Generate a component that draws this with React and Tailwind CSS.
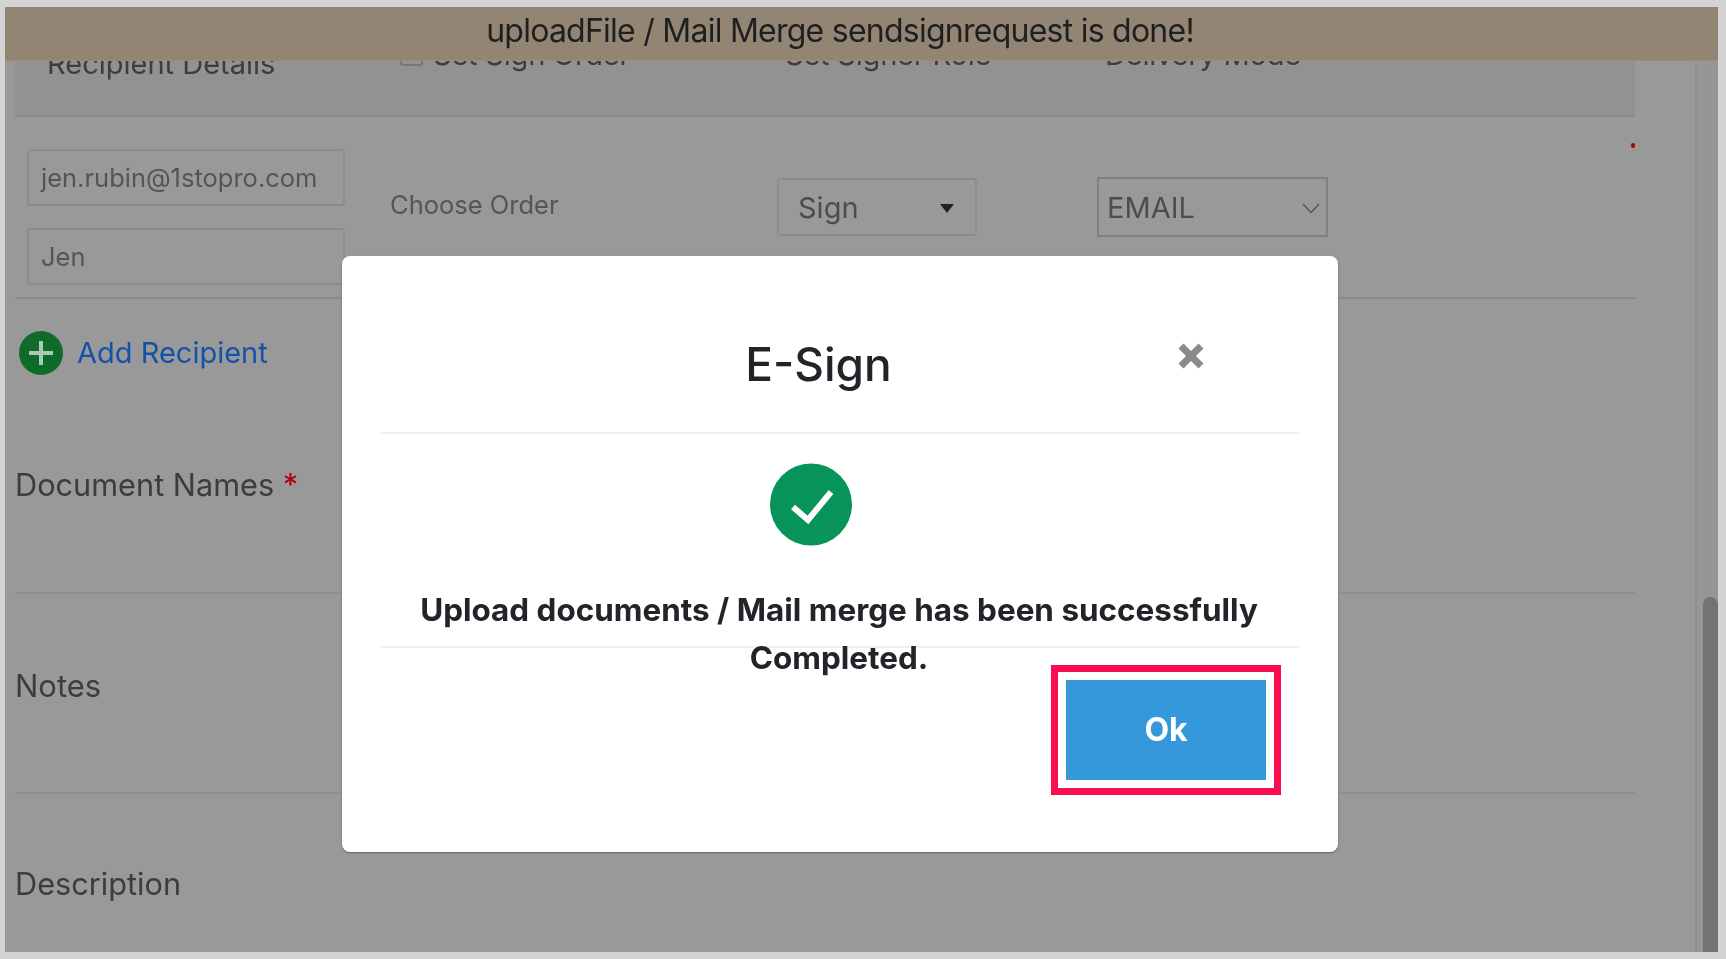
export default function App() {
  const font = { fontFamily: 'Inter, "Liberation Sans", sans-serif' };
  return (
    <div style={font} className="relative w-[1726px] h-[959px] overflow-hidden bg-[#d4d4d4] pl-[5px] pt-[7px] pr-[8px] pb-[7px] blur-[0.4px]">
      <div className="flex h-full bg-[#999999]">
        <div className="w-[1630px] pl-[10px] text-[#3d3d3d]">
          <div className="flex h-[110px] border-b-2 border-[#8a8a8a] bg-[#929292] text-[29px] tracking-[-0.2px]">
            <span className="ml-[32px] mt-[41px] w-[353px] leading-[32px] tracking-normal">Recipient Details</span>
            <span className="mt-[32px] flex h-[32px] w-[385px] items-center gap-[10px] leading-[32px]">
              <span className="h-[22px] w-[23px] rounded-[3px] border-2 border-[#777]"></span>
              Set Sign Order
            </span>
            <span className="mt-[32px] w-[320px] leading-[32px]">Set Signer Role</span>
            <span className="mt-[32px] leading-[32px]">Delivery Mode</span>
          </div>

          <div className="relative flex h-[182px] border-b-2 border-[#8a8a8a]">
            <div className="ml-[12px] mt-[32px] flex w-[318px] flex-col gap-[22px] text-[25.5px] text-[#555]">
              <div className="flex h-[57px] items-center rounded-[3px] border-2 border-[#8c8c8c] pl-[12px] pt-[2px]">jen.rubin@1stopro.com</div>
              <div className="flex h-[57px] items-center rounded-[3px] border-2 border-[#8c8c8c] pl-[12px] pt-[1px]">Jen</div>
            </div>
            <div className="ml-[45px] mt-[71px] w-[387px] text-[25.5px] leading-[34px] text-[#555]">Choose Order</div>
            <div className="mt-[61px] flex h-[58px] w-[200px] items-center justify-between rounded-[3px] border-2 border-[#8c8c8c] pl-[19px] pr-[21px] pt-[2px] text-[29px] text-[#4d4d4d]">
              Sign
              <svg width="14" height="9" viewBox="0 0 14 9"><path d="M0 0h14L7 9z" fill="#222" /></svg>
            </div>
            <div className="ml-[120px] mt-[60px] flex h-[60px] w-[231px] items-center justify-between border-2 border-[#808080] pl-[8px] pr-[6px] pt-[2px] text-[29px] text-[#4d4d4d]">
              EMAIL
              <svg width="18" height="11" viewBox="0 0 18 11" fill="none"><path d="M1 1l8 8.5L17 1" stroke="#555" strokeWidth="1.5" /></svg>
            </div>
            <span className="absolute left-[1616px] top-[26px] h-[5px] w-[4px] rounded-full bg-[#b00000]"></span>
          </div>

          <div className="h-[263px] border-b-2 border-[#8e8e8e]">
            <div className="ml-[4px] mt-[32px] flex items-center gap-[14px]">
              <svg width="44" height="44" viewBox="0 0 44 44">
                <circle cx="22" cy="22" r="22" fill="#0f6b2a" />
                <path d="M22 10v24M10 22h24" stroke="#a9c9b2" strokeWidth="4" />
              </svg>
              <span className="text-[29px] text-[#1551a8]">Add Recipient</span>
            </div>
            <div className="mt-[90px] text-[30.7px] leading-[40px]">
              Document Names <span className="text-[#b00000]">*</span>
            </div>
          </div>

          <div className="flex h-[200px] items-center border-b-2 border-[#8e8e8e] pb-[14px] text-[31px]">Notes</div>
          <div className="pt-[70px] text-[30.7px] leading-[40px]">Description</div>
        </div>

        <div className="ml-[60px] w-[8px] border-l-2 border-[#8f8f8f] bg-[#969696]"></div>
        <div className="relative w-[15px] bg-[#969696]">
          <div className="absolute inset-x-0 bottom-0 top-[590px] rounded-t-[8px] bg-[#737373]"></div>
        </div>
      </div>

      <div className="absolute left-[5px] right-[8px] top-[7px] flex h-[54px] items-center justify-center border-b border-[#a5896e] bg-[#928573] pb-[5px] pr-[43px] text-[32px] tracking-[-0.75px] text-[#1f1f1f]">
        uploadFile / Mail Merge sendsignrequest is done!
      </div>

      <div className="absolute left-[342px] top-[256px] flex h-[596px] w-[996px] flex-col rounded-[8px] bg-white px-[39px] text-[#212529] shadow-[0_1px_2px_rgba(0,0,0,0.35)]">
        <div className="relative flex h-[178px] shrink-0 items-center justify-center border-b-2 border-[#f0f0f0]">
          <span className="mr-[43px] mt-[40px] text-[46px] font-medium">E-Sign</span>
          <svg className="absolute left-[797px] top-[87px]" width="26" height="26" viewBox="0 0 26 26">
            <path d="M3 3l20 20M23 3L3 23" stroke="#8a8a8a" strokeWidth="7" />
          </svg>
        </div>
        <div className="relative flex h-[214px] shrink-0 flex-col items-center border-b-2 border-[#f0f0f0]">
          <svg className="mr-[58px] mt-[29px]" width="82" height="83" viewBox="0 0 82 83">
            <circle cx="41" cy="41.5" r="41" fill="#06945a" />
            <path d="M23 44l15 13 23-28" fill="none" stroke="#fff" strokeWidth="6" />
          </svg>
        </div>
        <p className="absolute left-0 right-0 top-[330px] pr-[2px] text-center text-[31.45px] font-bold leading-[48px]">
          Upload documents / Mail merge has been successfully<br />Completed.
        </p>
        <div className="ml-auto mr-[18px] mt-[17px] border-[7px] border-[#fb0d4f] p-[8px]">
          <div className="flex h-[100px] w-[200px] items-center justify-center bg-[#3498db] text-[32px] font-bold text-white">Ok</div>
        </div>
      </div>
    </div>
  );
}
